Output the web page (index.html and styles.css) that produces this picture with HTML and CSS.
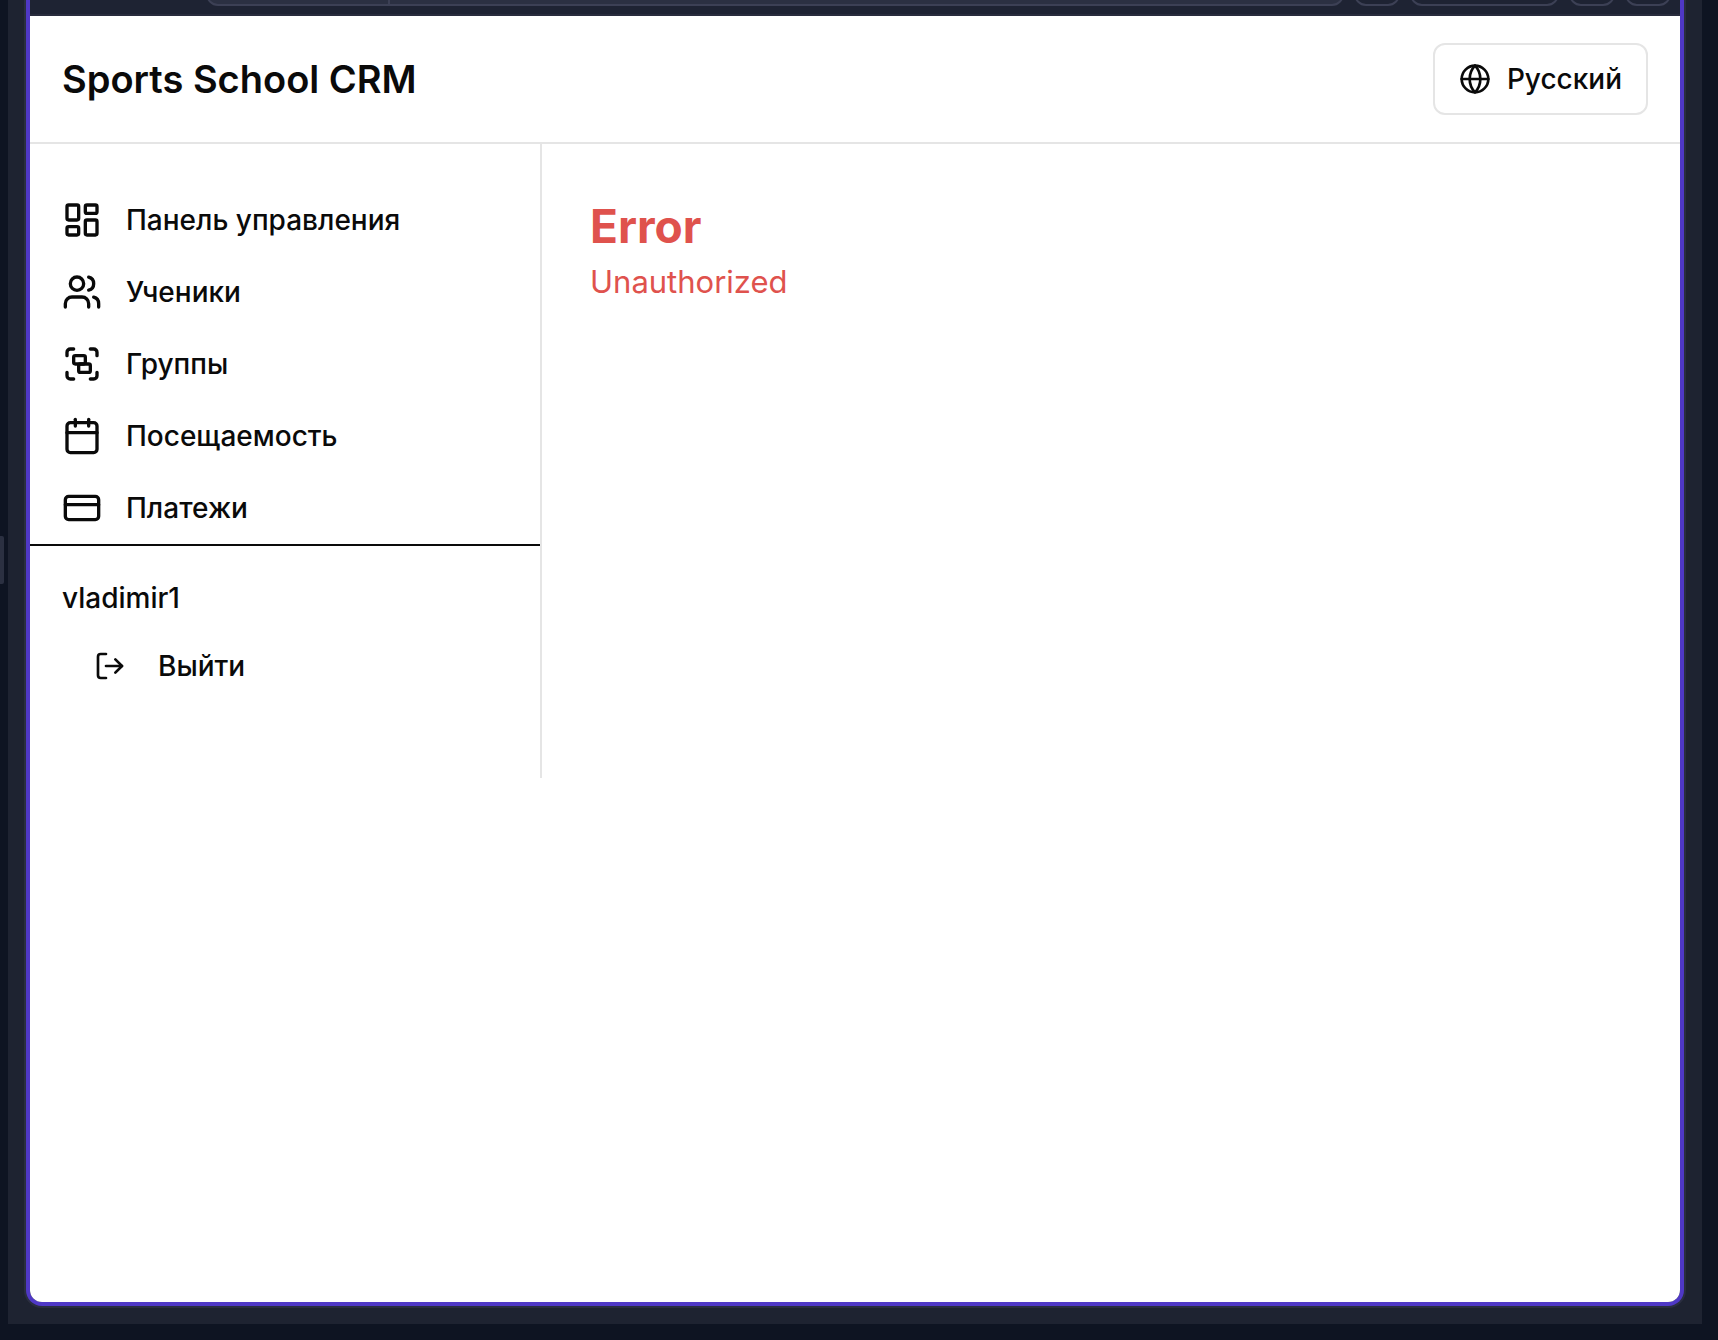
FILE: index.html
```html
<!DOCTYPE html>
<html lang="ru">
<head>
<meta charset="utf-8">
<meta name="viewport" content="width=device-width, initial-scale=1">
<title>Sports School CRM</title>
<link rel="stylesheet" href="styles.css">
</head>
<body>
<div class="workspace">
  <span class="resize-handle"></span>
  <div class="panel">
    <div class="browser">
      <div class="toolbar">
        <div class="address"><span class="address-host"></span><span class="address-path"></span></div>
        <button class="tool" type="button" aria-label="Reload"></button>
        <button class="tool tool-wide" type="button" aria-label="Device"></button>
        <button class="tool" type="button" aria-label="Open"></button>
        <button class="tool" type="button" aria-label="Menu"></button>
      </div>
      <div class="app">
        <header class="header">
          <h1 class="brand">Sports School CRM</h1>
          <button class="language" type="button">
            <svg class="icon icon-small" viewBox="0 0 24 24"><circle cx="12" cy="12" r="10"/><path d="M12 2a14.5 14.5 0 0 0 0 20 14.5 14.5 0 0 0 0-20"/><path d="M2 12h20"/></svg>
            Русский
          </button>
        </header>
        <div class="content">
          <aside class="sidebar">
            <nav class="nav">
              <a class="nav-link" href="#dashboard">
                <svg class="icon" viewBox="0 0 24 24"><rect width="7" height="9" x="3" y="3" rx="1"/><rect width="7" height="5" x="14" y="3" rx="1"/><rect width="7" height="9" x="14" y="12" rx="1"/><rect width="7" height="5" x="3" y="16" rx="1"/></svg>
                Панель управления
              </a>
              <a class="nav-link" href="#students">
                <svg class="icon" viewBox="0 0 24 24"><path d="M16 21v-2a4 4 0 0 0-4-4H6a4 4 0 0 0-4 4v2"/><circle cx="9" cy="7" r="4"/><path d="M22 21v-2a4 4 0 0 0-3-3.87"/><path d="M16 3.13a4 4 0 0 1 0 7.75"/></svg>
                Ученики
              </a>
              <a class="nav-link" href="#groups">
                <svg class="icon" viewBox="0 0 24 24"><path d="M3 7V5c0-1.1.9-2 2-2h2"/><path d="M17 3h2c1.1 0 2 .9 2 2v2"/><path d="M21 17v2c0 1.1-.9 2-2 2h-2"/><path d="M7 21H5c-1.1 0-2-.9-2-2v-2"/><rect width="7" height="5" x="7" y="7" rx="1"/><rect width="7" height="5" x="10" y="12" rx="1"/></svg>
                Группы
              </a>
              <a class="nav-link" href="#attendance">
                <svg class="icon" viewBox="0 0 24 24"><path d="M8 2v4"/><path d="M16 2v4"/><rect width="18" height="18" x="3" y="4" rx="2"/><path d="M3 10h18"/></svg>
                Посещаемость
              </a>
              <a class="nav-link" href="#payments">
                <svg class="icon" viewBox="0 0 24 24"><rect width="20" height="14" x="2" y="5" rx="2"/><path d="M2 10h20"/></svg>
                Платежи
              </a>
            </nav>
            <div class="account">
              <p class="username">vladimir1</p>
              <button class="logout" type="button">
                <svg class="icon icon-small" viewBox="0 0 24 24"><path d="M9 21H5a2 2 0 0 1-2-2V5a2 2 0 0 1 2-2h4"/><path d="m16 17 5-5-5-5"/><path d="M21 12H9"/></svg>
                Выйти
              </button>
            </div>
          </aside>
          <main class="main">
            <h2 class="error-title">Error</h2>
            <p class="error-text">Unauthorized</p>
          </main>
        </div>
      </div>
    </div>
  </div>
</div>
</body>
</html>
```
FILE: styles.css
```css
* {
  box-sizing: border-box;
}

body {
  margin: 0;
  background: #0e1422;
  color: #0a0a0a;
  font-family: Inter, "Liberation Sans", sans-serif;
  font-size: 28px;
  font-weight: 500;
  line-height: 40px;
}

h1, h2, p {
  margin: 0;
}

button {
  font: inherit;
  color: inherit;
  cursor: pointer;
}

.workspace {
  position: relative;
  display: flex;
  min-height: 100vh;
  padding: 0 16px 16px 8px;
}

/* Grip of the splitter, lying over the left edge */
.resize-handle {
  position: absolute;
  left: 0;
  top: 40%;
  width: 4px;
  height: 48px;
  border-radius: 0 2px 2px 0;
  background: #2b3041;
}

.panel {
  flex: 1;
  display: flex;
  padding: 0 16px 16px;
  background: #1e2331;
}

.browser {
  flex: 1;
  display: flex;
  flex-direction: column;
  overflow: hidden;
  border: 4px solid #4f38c6;
  border-top: 0;
  border-radius: 0 0 16px 16px;
  margin: 0 2px 2px;
  box-shadow: 0 0 0 2px #2a2e40;
  background: #1e2333;
}

/* Only the lower edge of the toolbar's controls is in view */
.toolbar {
  display: flex;
  align-items: flex-end;
  gap: 10px;
  height: 16px;
  padding: 0 9px 8px 176px;
  border-bottom: 2px solid #282c3d;
  overflow: hidden;
}

.address,
.tool {
  height: 46px;
  border: 2px solid #3c4055;
  border-radius: 12px;
}

.address {
  flex: 1;
  display: flex;
  background: #2b3042;
}

.address-host {
  width: 182px;
  border-right: 2px solid #3c4055;
}

.tool {
  width: 46px;
  padding: 0;
  background: none;
}

.tool-wide {
  width: 149px;
}

.app {
  flex: 1;
  background: #fff;
}

.header {
  display: flex;
  align-items: center;
  justify-content: space-between;
  padding: 27px 32px;
  border-bottom: 2px solid #e5e5e5;
}

.brand {
  font-size: 38px;
  font-weight: 600;
  line-height: 56px;
}

.language {
  display: flex;
  align-items: center;
  gap: 16px;
  height: 72px;
  padding: 0 24px;
  border: 2px solid #e5e5e5;
  border-radius: 12px;
  background: #fff;
}

.icon {
  flex: none;
  width: 40px;
  height: 40px;
  fill: none;
  stroke: currentColor;
  stroke-width: 2;
  stroke-linecap: round;
  stroke-linejoin: round;
}

.icon-small {
  width: 32px;
  height: 32px;
}

.content {
  display: flex;
  align-items: flex-start;
}

.sidebar {
  width: 512px;
  padding: 40px 0 72px;
  border-right: 2px solid #e5e5e5;
}

.nav-link {
  display: flex;
  align-items: center;
  gap: 24px;
  height: 72px;
  padding: 0 32px;
  color: inherit;
  text-decoration: none;
}

.account {
  padding: 32px 32px 4px;
  border-top: 2px solid #0a0a0a;
}

.username {
  padding-bottom: 12px;
}

.logout {
  display: flex;
  align-items: center;
  gap: 32px;
  height: 72px;
  padding: 0 32px;
  border: 0;
  background: none;
}

.main {
  flex: 1;
  padding: 50px 48px;
  color: #df524d;
}

.error-title {
  font-size: 46px;
  font-weight: 700;
  line-height: 64px;
}

.error-text {
  font-size: 31px;
  font-weight: 400;
  line-height: 48px;
}
```
